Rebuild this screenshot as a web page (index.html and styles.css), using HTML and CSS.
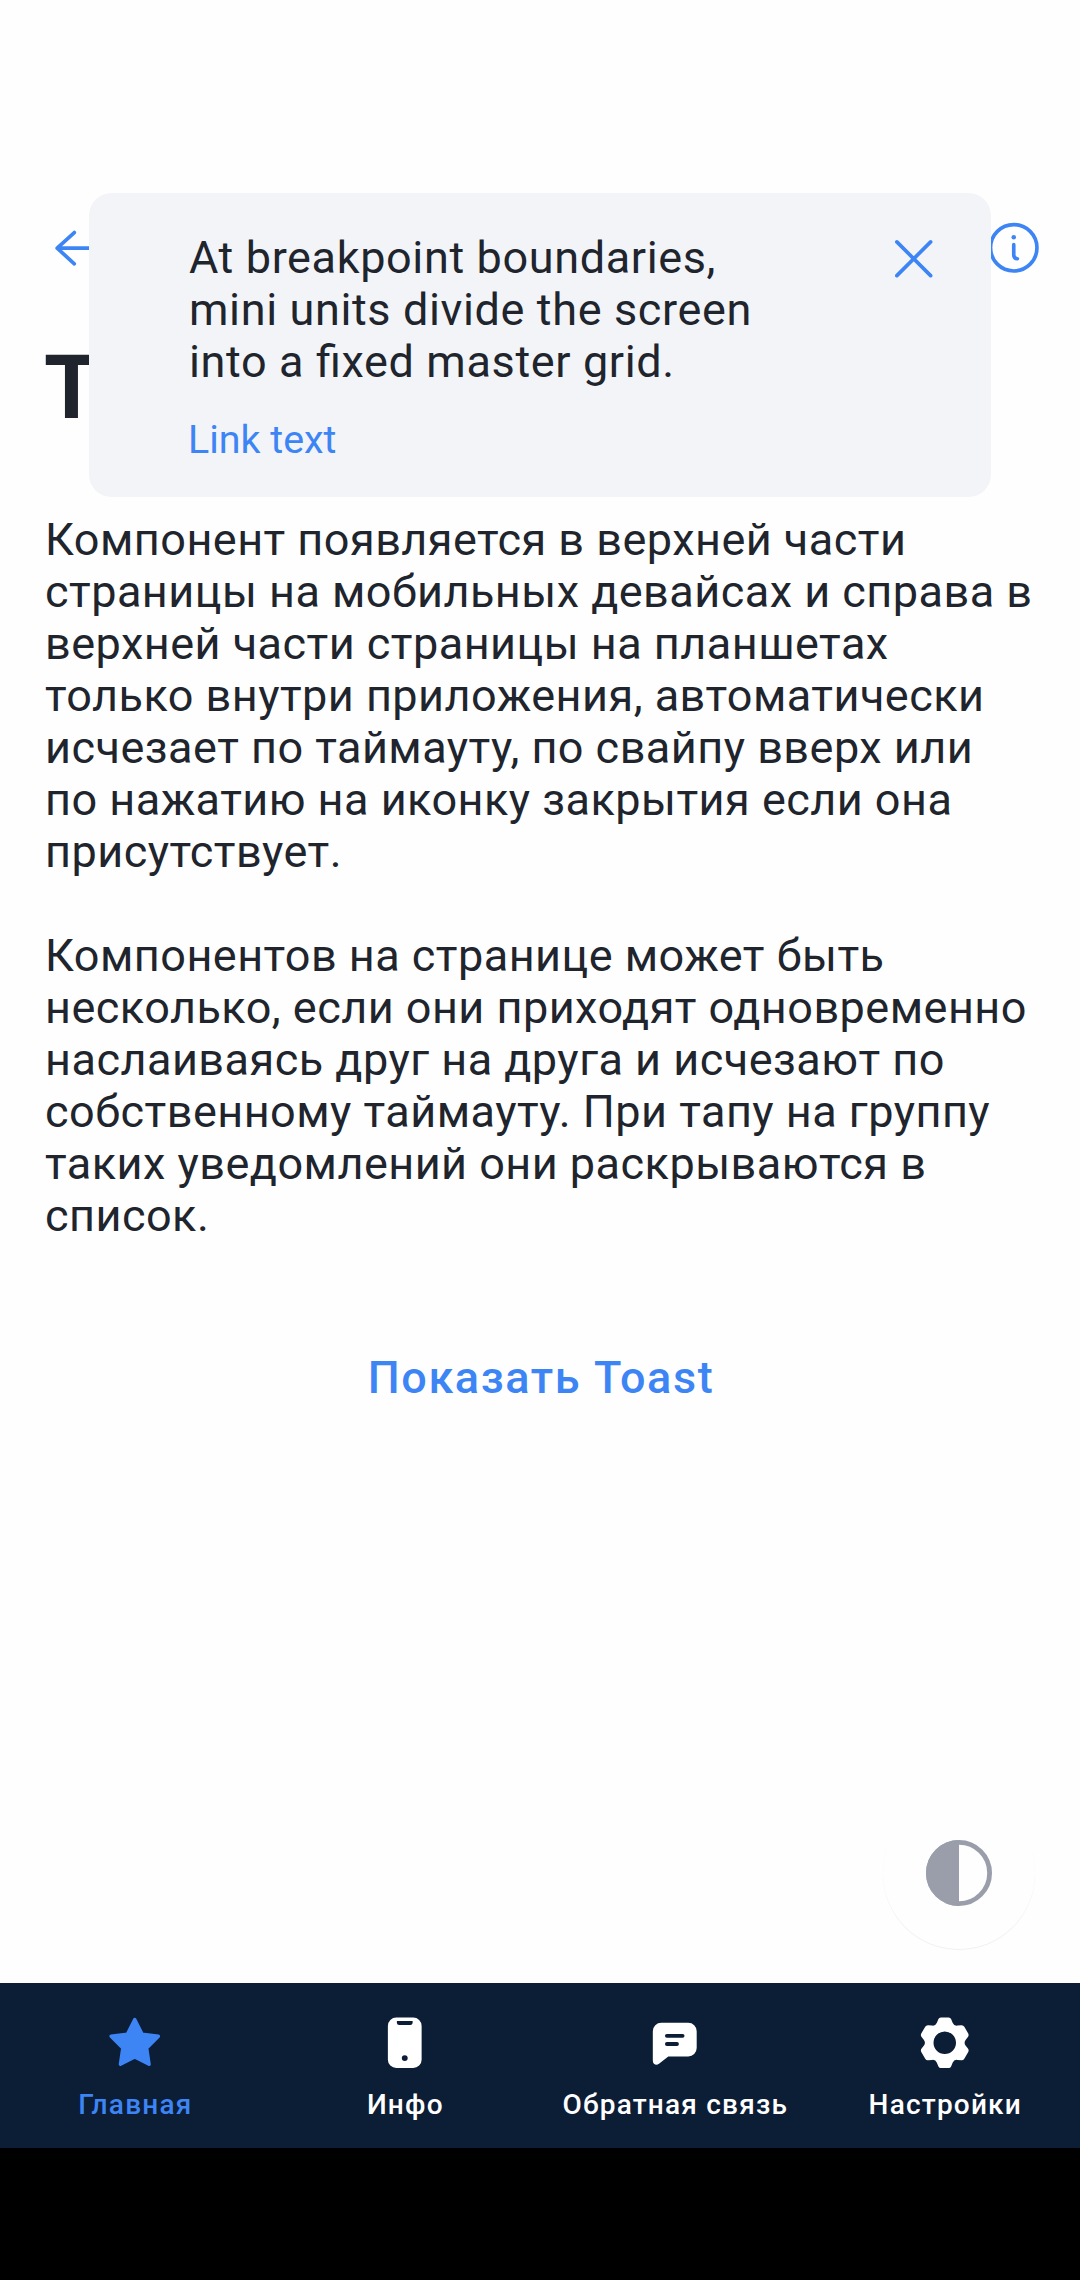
FILE: index.html
```html
<!DOCTYPE html>
<html lang="ru">
<head>
<meta charset="utf-8">
<title>Toast</title>
<link rel="stylesheet" href="styles.css">
</head>
<body>
<div class="screen">
  <header class="topbar">
    <svg class="icon" viewBox="0 0 24 24"><path class="line" d="M20.6 12.15H3.2M9 6.6L2.9 12.15L9 17.7"/></svg>
    <svg class="icon" viewBox="0 0 24 24"><circle class="line" cx="12" cy="12" r="8.25"/><circle cx="12" cy="8.3" r=".8"/><path class="line" d="M12 10.9V14.6Q12 15.9 13.3 15.9"/></svg>
  </header>
  <main class="content">
    <h1 class="title">T</h1>
    <p class="text">Компонент появляется в верхней части<br>страницы на мобильных девайсах и справа в<br>верхней части страницы на планшетах<br>только внутри приложения, автоматически<br>исчезает по таймауту, по свайпу вверх или<br>по нажатию на иконку закрытия если она<br>присутствует.</p>
    <p class="text">Компонентов на странице может быть<br>несколько, если они приходят одновременно<br>наслаиваясь друг на друга и исчезают по<br>собственному таймауту. При тапу на группу<br>таких уведомлений они раскрываются в<br>список.</p>
    <button class="show">Показать Toast</button>
  </main>
  <button class="fab" aria-label="Тема">
    <svg class="icon-contrast" viewBox="0 0 66 66"><circle cx="33" cy="33" r="30.6" fill="none" stroke="#9a9eaa" stroke-width="4.8"/><path fill="#9a9eaa" d="M33 0A33 33 0 0 0 33 66Z"/></svg>
  </button>
  <nav class="tabs">
    <a class="tab active"><svg class="icon" viewBox="0 0 24 24"><path stroke="currentColor" stroke-width="1.2" stroke-linejoin="round" d="M12 3.7L14.65 8.95L20.4 9.7L16.25 13.85L17.1 19.65L12 17.1L6.9 19.65L7.75 13.85L3.6 9.7L9.35 8.95Z"/></svg><span>Главная</span></a>
    <a class="tab"><svg class="icon" viewBox="0 0 24 24"><path fill-rule="evenodd" d="M9 3H15A3 3 0 0 1 18 6V18A3 3 0 0 1 15 21H9A3 3 0 0 1 6 18V6A3 3 0 0 1 9 3ZM9.2 4.3V5A.8 .8 0 0 0 10 5.7H14A.8 .8 0 0 0 14.8 5V4.3ZM12 16.4A1.05 1.05 0 0 0 12 18.5A1.05 1.05 0 0 0 12 16.4Z"/></svg><span>Инфо</span></a>
    <a class="tab"><svg class="icon" viewBox="0 0 24 24"><path d="M7.2 4.9H16.8A3 3 0 0 1 19.8 7.9V13.9A3 3 0 0 1 16.8 16.9H9.7L6.4 19.5Q5.4 20.1 4.6 19.5Q4.2 19.1 4.2 18.4V7.9A3 3 0 0 1 7.2 4.9Z"/><path class="cut" d="M9.2 9.55H14.8M9.2 12.45H12.8"/></svg><span>Обратная связь</span></a>
    <a class="tab"><svg class="icon" viewBox="0 0 24 24"><path fill-rule="evenodd" d="M10.6 3H13.4Q14 3 14.25 3.55L14.8 4.9Q15.3 6.1 16.5 5.9L17.9 5.75Q18.6 5.7 18.95 6.3L20.35 8.7Q20.65 9.3 20.3 9.85L19.4 11Q18.7 12 19.4 13L20.3 14.15Q20.65 14.7 20.35 15.3L18.95 17.7Q18.6 18.3 17.9 18.25L16.5 18.1Q15.3 17.9 14.8 19.1L14.25 20.45Q14 21 13.4 21H10.6Q10 21 9.75 20.45L9.2 19.1Q8.7 17.9 7.5 18.1L6.1 18.25Q5.4 18.3 5.05 17.7L3.65 15.3Q3.35 14.7 3.7 14.15L4.6 13Q5.3 12 4.6 11L3.7 9.85Q3.35 9.3 3.65 8.7L5.05 6.3Q5.4 5.7 6.1 5.75L7.5 5.9Q8.7 6.1 9.2 4.9L9.75 3.55Q10 3 10.6 3ZM12 8A4 4 0 0 0 12 16A4 4 0 0 0 12 8Z"/></svg><span>Настройки</span></a>
  </nav>
  <div class="system-bar"></div>
  <section class="toast">
    <div class="toast-body">
      <p class="toast-text">At breakpoint boundaries,<br>mini units divide the screen<br>into a fixed master grid.</p>
      <a class="toast-link">Link text</a>
    </div>
    <svg class="icon" viewBox="0 0 24 24"><path class="line" d="M6 6L18 18M18 6L6 18"/></svg>
  </section>
</div>
</body>
</html>
```
FILE: styles.css
```css
* { box-sizing: border-box; }
body { margin: 0; background: #fefefe; font-family: Roboto, "Noto Sans", sans-serif; color: #20242d; }
p, h1 { margin: 0; }
button { border: 0; padding: 0; background: none; font-family: inherit; }
.screen { position: relative; display: flex; flex-direction: column; width: 1080px; height: 2280px; overflow: hidden; }
.icon { width: 67.5px; height: 67.5px; flex: none; fill: currentColor; }
.line { fill: none; stroke: currentColor; stroke-width: 1.3; stroke-linecap: round; stroke-linejoin: round; }
.cut { fill: none; stroke: #0c1d36; stroke-width: 1.35; stroke-linecap: round; }
.topbar { display: flex; justify-content: space-between; padding: 214px 32.5px 0 49px; color: #3d85f5; }
.content { flex: 1; display: flex; flex-direction: column; padding: 53px 0 0 45px; }
.title { margin-left: -1px; font-size: 89px; line-height: 106px; font-weight: 700; height: 179px; }
.text { font-size: 45px; line-height: 52px; letter-spacing: .48px; margin-bottom: 52px; white-space: nowrap; }
.show { width: 990px; padding-left: 2px; margin-top: 58px; font-size: 45px; line-height: 52px; font-weight: 500; letter-spacing: 1.6px; color: #3d85f5; }
.fab { position: absolute; left: 883px; top: 1797px; width: 152px; height: 152px; border-radius: 50%; background: #fefefe; box-shadow: 0 1px 1px rgba(0, 0, 0, .06); display: flex; align-items: center; justify-content: center; }
.icon-contrast { width: 66px; height: 66px; }
.tabs { display: grid; grid-template-columns: repeat(4, 270px); height: 165px; background: #0c1d36; color: #fff; }
.tab { display: flex; flex-direction: column; align-items: center; gap: 11px; padding-top: 26px; font-size: 28px; line-height: 33px; font-weight: 500; letter-spacing: 1.2px; white-space: nowrap; }
.tab span { padding-left: .6px; }
.tab.active { color: #3d85f5; }
.system-bar { height: 132px; background: #000; }
.toast { position: absolute; left: 89px; top: 193px; width: 902px; height: 304px; padding: 39px 43.5px 0 100px; border-radius: 22.5px; background: #f2f4f8; display: flex; justify-content: space-between; }
.toast .icon { margin-top: -7px; color: #3d85f5; }
.toast-text { font-size: 45px; line-height: 52px; letter-spacing: .63px; font-feature-settings: "liga" 1; white-space: nowrap; }
.toast-link { display: block; margin: 29px 0 0 -1px; font-size: 39.4px; line-height: 46px; color: #3d85f5; }
```
